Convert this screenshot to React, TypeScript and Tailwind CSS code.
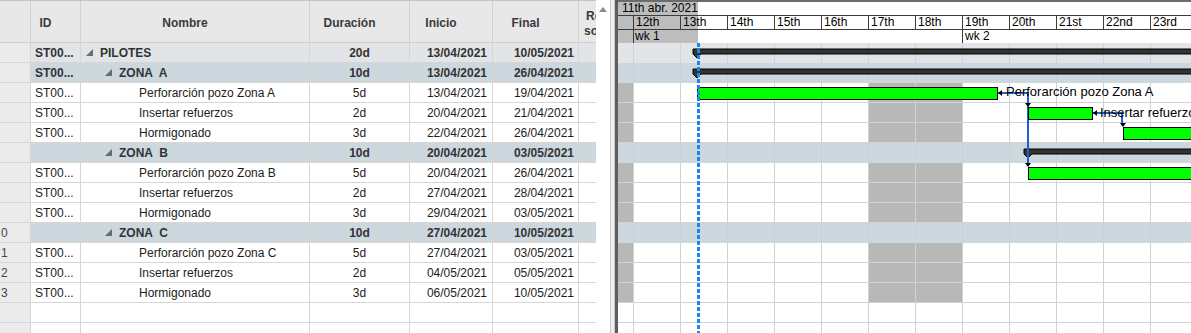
import type { ReactNode } from "react";

type Kind = "top" | "zone" | "task" | "empty";

type Row = {
  num?: string;
  id?: string;
  name?: string;
  level?: number;
  dur?: string;
  start?: string;
  end?: string;
  kind: Kind;
};

const rows: Row[] = [
  { id: "ST00...", name: "PILOTES", level: 0, dur: "20d", start: "13/04/2021", end: "10/05/2021", kind: "top" },
  { id: "ST00...", name: "ZONA  A", level: 1, dur: "10d", start: "13/04/2021", end: "26/04/2021", kind: "zone" },
  { id: "ST00...", name: "Perforarción pozo Zona A", level: 2, dur: "5d", start: "13/04/2021", end: "19/04/2021", kind: "task" },
  { id: "ST00...", name: "Insertar refuerzos", level: 2, dur: "2d", start: "20/04/2021", end: "21/04/2021", kind: "task" },
  { id: "ST00...", name: "Hormigonado", level: 2, dur: "3d", start: "22/04/2021", end: "26/04/2021", kind: "task" },
  { name: "ZONA  B", level: 1, dur: "10d", start: "20/04/2021", end: "03/05/2021", kind: "zone" },
  { id: "ST00...", name: "Perforarción pozo Zona B", level: 2, dur: "5d", start: "20/04/2021", end: "26/04/2021", kind: "task" },
  { id: "ST00...", name: "Insertar refuerzos", level: 2, dur: "2d", start: "27/04/2021", end: "28/04/2021", kind: "task" },
  { id: "ST00...", name: "Hormigonado", level: 2, dur: "3d", start: "29/04/2021", end: "03/05/2021", kind: "task" },
  { num: "0", name: "ZONA  C", level: 1, dur: "10d", start: "27/04/2021", end: "10/05/2021", kind: "zone" },
  { num: "1", id: "ST00...", name: "Perforarción pozo Zona C", level: 2, dur: "5d", start: "27/04/2021", end: "03/05/2021", kind: "task" },
  { num: "2", id: "ST00...", name: "Insertar refuerzos", level: 2, dur: "2d", start: "04/05/2021", end: "05/05/2021", kind: "task" },
  { num: "3", id: "ST00...", name: "Hormigonado", level: 2, dur: "3d", start: "06/05/2021", end: "10/05/2021", kind: "task" },
  { kind: "empty" },
  { kind: "empty" },
];

const days = ["12th", "13th", "14th", "15th", "16th", "17th", "18th", "19th", "20th", "21st", "22nd", "23rd"];
const weekend = [false, false, false, false, false, true, true, false, false, false, false, false];

const rowBg: Record<Kind, string> = {
  top: "bg-[#e2e4e8]",
  zone: "bg-[#cdd7de]",
  task: "bg-white",
  empty: "bg-white",
};

function Tri() {
  return (
    <svg width="7" height="7" viewBox="0 0 7 7" className="mr-[7px] shrink-0">
      <polygon points="7,0 7,7 0,7" fill="#6b6b6b" />
    </svg>
  );
}

function HeadCell({ w, children }: { w: string; children?: ReactNode }) {
  return (
    <div className={`${w} flex shrink-0 items-center justify-center border-r border-[#d2d2d2] pt-[3px] pr-5`}>
      {children}
    </div>
  );
}

function TableRow({ row }: { row: Row }) {
  const bold = row.kind === "top" || row.kind === "zone";
  const indent = row.level === 0 ? "pl-[5px]" : row.level === 1 ? "pl-[24px]" : "pl-[58px]";
  return (
    <div className={`flex h-5 border-b border-[#d6d6d6] leading-[20px] ${bold ? "font-bold text-[#333]" : "text-[#1c1c1c]"}`}>
      <div className="w-[31px] shrink-0 border-r border-[#d6d6d6] bg-[#ebebeb] pl-[1px] font-normal text-[#444]">
        {row.num}
      </div>
      <div className={`flex flex-1 ${rowBg[row.kind]}`}>
        <div className="w-[50px] shrink-0 border-r border-[#d6d6d6] pl-[4px]">{row.id}</div>
        <div className={`flex w-[229px] shrink-0 items-center whitespace-pre border-r border-[#d6d6d6] ${indent}`}>
          {bold ? <Tri /> : null}
          {row.name}
        </div>
        <div className="w-[100px] shrink-0 border-r border-[#d6d6d6] text-center">{row.dur}</div>
        <div className="w-[83px] shrink-0 border-r border-[#d6d6d6] pr-[5px] text-right">{row.start}</div>
        <div className="w-[86px] shrink-0 border-r border-[#d6d6d6] pr-[4px] text-right">{row.end}</div>
        <div className="w-[17px] shrink-0" />
      </div>
    </div>
  );
}

function GanttRow({ row }: { row: Row }) {
  const line =
    row.kind === "zone" ? "border-[#c7d1d8]" : row.kind === "top" ? "border-[#d0d3d7]" : "border-[#d2d2d2]";
  const shade = row.kind === "task";
  return (
    <div className={`flex h-5 ${rowBg[row.kind]} ${row.kind === "zone" || row.kind === "top" ? "" : "border-b border-[#d2d2d2]"}`}>
      <div className={`w-[16px] shrink-0 border-r ${line} ${shade ? "bg-[#b8b8b8]" : ""}`} />
      {days.map((d, i) => (
        <div key={d} className={`w-[47px] shrink-0 border-r ${line} ${shade && weekend[i] ? "bg-[#b8b8b8]" : ""}`} />
      ))}
    </div>
  );
}

function Summary({ x, y }: { x: number; y: number }) {
  return (
    <polygon
      points={`${x},${y} 600,${y} 600,${y + 5} ${x + 8},${y + 5} ${x + 4},${y + 9} ${x},${y + 5}`}
      fill="#333333"
      stroke="#000"
      strokeWidth="1"
    />
  );
}

function Bar({ x, y, w }: { x: number; y: number; w: number }) {
  return <rect x={x + 0.5} y={y + 0.5} width={w} height={12} fill="#00ff00" stroke="#000" strokeWidth="1" />;
}

function Arrow({ x, y }: { x: number; y: number }) {
  return <polygon points={`${x - 3},${y - 4} ${x + 3},${y - 4} ${x},${y}`} fill="#000" />;
}

export default function App() {
  return (
    <div className="flex h-[333px] w-[1191px] overflow-hidden bg-white font-['Liberation_Sans',Arial,sans-serif] text-[12px]">
      {/* table */}
      <div className="w-[596px] shrink-0">
        <div className="flex h-[43px] border-t border-[#c4c4c4] border-b border-b-[#cfcfcf] bg-[#e8e8e8] font-bold text-[#3a3a3a]">
          <div className="w-[31px] shrink-0 border-r border-[#d2d2d2]" />
          <HeadCell w="w-[50px]">ID</HeadCell>
          <HeadCell w="w-[229px]">Nombre</HeadCell>
          <HeadCell w="w-[100px]">Duración</HeadCell>
          <HeadCell w="w-[83px]">Inicio</HeadCell>
          <HeadCell w="w-[86px]">Final</HeadCell>
          <div className="w-[17px] shrink-0 overflow-hidden whitespace-nowrap pt-[8px] leading-[15px]">
            <div className="pl-[7px]">Re</div>
            <div className="pl-[5px]">so</div>
          </div>
        </div>
        {rows.map((r, i) => (
          <TableRow key={i} row={r} />
        ))}
      </div>

      {/* scrollbar */}
      <div className="w-[14px] shrink-0 bg-white pt-[7px] pl-[3px]">
        <svg width="8" height="5" viewBox="0 0 8 5">
          <polygon points="4,0 8,5 0,5" fill="#8a8a8a" />
        </svg>
      </div>
      <div className="w-[5px] shrink-0 border-x border-[#c9c9c9] bg-[#f0f0f0]" />
      <div className="w-[3px] shrink-0 bg-[#5e5e5e]" />

      {/* gantt */}
      <div className="flex-1 overflow-hidden">
        <div className="h-[43px] border-t-2 border-[#6b6b6b] bg-[linear-gradient(to_right,#bdbdbd_80px,#ffffff_80px)] leading-[13px] text-black">
          <div className="h-[13px] whitespace-nowrap pl-[4px]">11th abr. 2021</div>
          <div className="flex h-[15px] border-y border-[#3c3c3c]">
            <div className="w-[16px] shrink-0 border-r border-[#3c3c3c]" />
            {days.map((d) => (
              <div key={d} className="w-[47px] shrink-0 border-r border-[#3c3c3c] pl-[2px]">
                {d}
              </div>
            ))}
          </div>
          <div className="flex h-[13px] whitespace-nowrap">
            <div className="w-[16px] shrink-0 border-r border-[#3c3c3c]" />
            <div className="w-[329px] shrink-0 border-r border-[#3c3c3c] pl-[1px]">wk 1</div>
            <div className="w-[200px] shrink-0 pl-[2px]">wk 2</div>
          </div>
        </div>

        <div className="relative">
          {rows.map((r, i) => (
            <GanttRow key={i} row={r} />
          ))}

          <svg className="absolute left-0 top-0" width="573" height="290" viewBox="0 0 573 290">
            <Summary x={75} y={6} />
            <Summary x={75} y={26} />
            <Summary x={406} y={106} />

            <path d="M379 50 H410 V122" fill="none" stroke="#1f5fd0" strokeWidth="2" />
            <path d="M474 70 H504 V82" fill="none" stroke="#1f5fd0" strokeWidth="2" />

            <Bar x={79} y={44} w={300} />
            <Bar x={410} y={64} w={64} />
            <Bar x={505} y={84} w={100} />
            <Bar x={410} y={124} w={200} />

            <polygon points="380,50 384,47 384,53" fill="#000" />
            <polygon points="475,70 479,67 479,73" fill="#000" />
            <Arrow x={410} y={64} />
            <Arrow x={410} y={124} />
            <Arrow x={505} y={84} />

            <line x1="80.5" y1="0" x2="80.5" y2="290" stroke="#1a86f4" strokeWidth="3" strokeDasharray="4 2" />
          </svg>

          <div className="absolute left-[388px] top-[41px] whitespace-nowrap text-[13px] leading-[16px] text-black">
            Perforarción pozo Zona A
          </div>
          <div className="absolute left-[482px] top-[62px] whitespace-nowrap text-[13px] leading-[16px] text-black">
            Insertar refuerzos
          </div>
        </div>
      </div>
    </div>
  );
}
